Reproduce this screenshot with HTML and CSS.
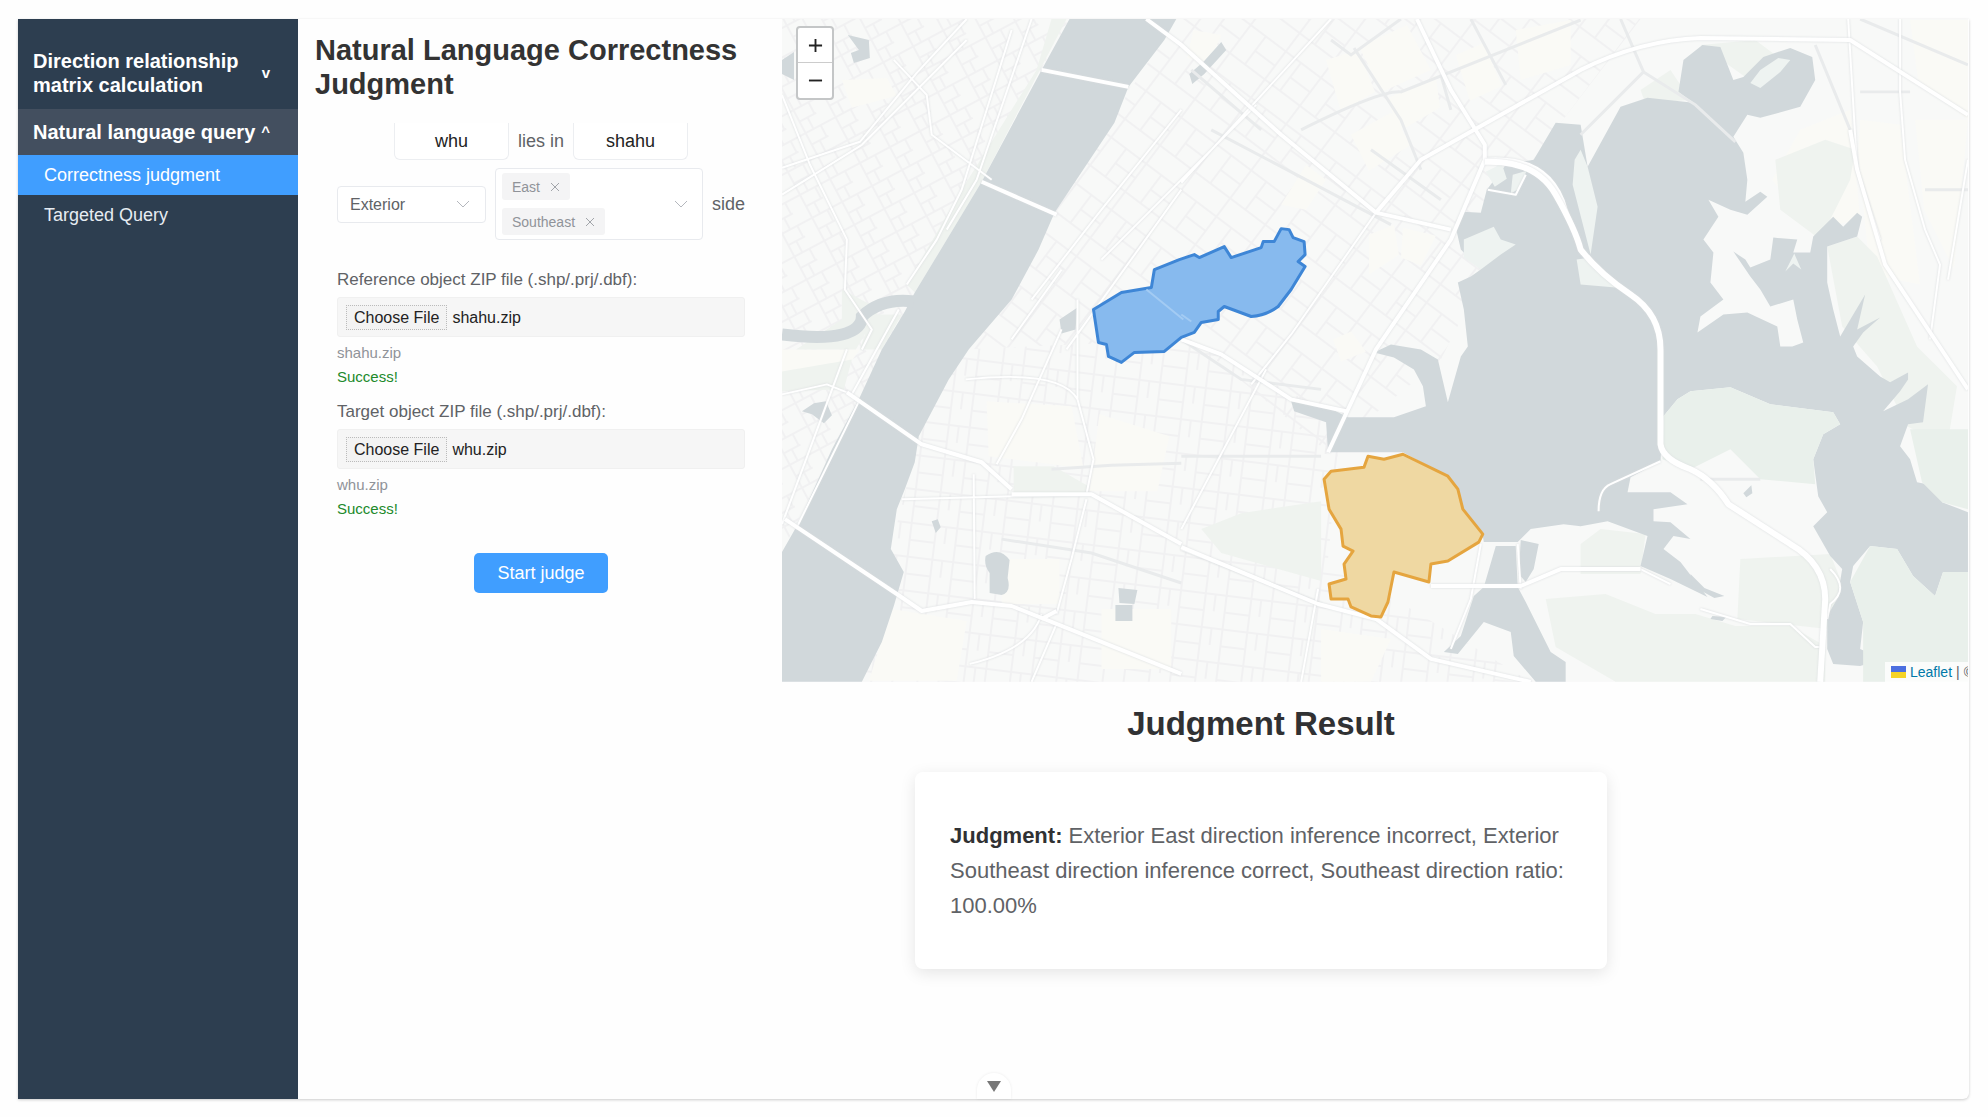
FILE: index.html
```html
<!DOCTYPE html>
<html lang="en">
<head>
<meta charset="utf-8">
<title>Natural Language Correctness Judgment</title>
<link rel="stylesheet" href="styles.css">
</head>
<body>
<div class="shell">
  <nav class="sidebar">
    <button class="group" type="button"><span>Direction relationship matrix calculation</span><span class="caret">v</span></button>
    <button class="group group-open" type="button"><span>Natural language query</span><span class="caret">^</span></button>
    <a class="item item-active" href="#judge">Correctness judgment</a>
    <a class="item" href="#query">Targeted Query</a>
  </nav>

  <section class="panel">
    <h1>Natural Language Correctness Judgment</h1>
    <form class="form">
      <div class="line">
        <input class="name" type="text" value="whu" aria-label="Target object">
        <span>lies in</span>
        <input class="name" type="text" value="shahu" aria-label="Reference object">
      </div>
      <div class="line relation">
        <div class="pick">
          <select aria-label="Relation"><option>Exterior</option><option>Interior</option></select>
          <svg class="chevron" viewBox="0 0 14 14"><path d="M1 4l6 6 6-6"/></svg>
        </div>
        <div class="multi" role="group" aria-label="Directions">
          <div class="tags">
            <span class="tag">East <button type="button" aria-label="Remove East"><svg viewBox="0 0 10 10"><path d="M1 1l8 8M9 1l-8 8"/></svg></button></span>
            <span class="tag">Southeast <button type="button" aria-label="Remove Southeast"><svg viewBox="0 0 10 10"><path d="M1 1l8 8M9 1l-8 8"/></svg></button></span>
          </div>
          <svg class="chevron" viewBox="0 0 14 14"><path d="M1 4l6 6 6-6"/></svg>
        </div>
        <span>side</span>
      </div>
      <div class="upload">
        <label for="ref">Reference object ZIP file (.shp/.prj/.dbf):</label>
        <input id="ref" type="file" accept=".zip" data-name="shahu.zip">
        <p class="file">shahu.zip</p>
        <p class="ok">Success!</p>
      </div>
      <div class="upload">
        <label for="target">Target object ZIP file (.shp/.prj/.dbf):</label>
        <input id="target" type="file" accept=".zip" data-name="whu.zip">
        <p class="file">whu.zip</p>
        <p class="ok">Success!</p>
      </div>
      <button class="start" type="button">Start judge</button>
    </form>
  </section>

  <main class="main">
    <div class="map">
      <svg class="tiles" viewBox="780 19 1188 664" preserveAspectRatio="xMidYMid slice" role="img" aria-label="Map">
        <defs>
          <pattern id="west" width="34" height="26" patternUnits="userSpaceOnUse" patternTransform="rotate(-28)"><path class="lane" d="M0 1H34M0 14H20M1 0V26M18 0V14M10 14V26"/></pattern>
          <pattern id="mid" width="58" height="44" patternUnits="userSpaceOnUse" patternTransform="rotate(-53)"><path class="lane" d="M0 1H58M0 20H36M1 0V44M36 0V44M18 20V44"/></pattern>
          <pattern id="south" width="46" height="34" patternUnits="userSpaceOnUse" patternTransform="rotate(7)"><path class="lane" d="M0 1H46M0 18H26M1 0V34M26 0V34M36 0V18"/></pattern>
        </defs>
        <rect class="land" x="780" y="19" width="1188" height="664"/>
        <!-- side streets -->
        <path fill="url(#west)" d="M780 19H1068L913 293 857 400 780 553Z"/>
        <path fill="url(#mid)" d="M1175 19H1640L1560 123 1440 360 1327 453 1190 340 960 350Z"/>
        <path fill="url(#south)" d="M960 350L1190 340 1340 420 1327 560 1460 640 1530 683H860L892 607 889 550 917 437Z"/>
        <!-- blocks and parks -->
        <g class="block">
          <path d="M1358 47l48-22 24 45-49 22zM1388 98l47-22 4 32-43 25zM1325 60l32-10 17 42-34 20zM1455 55l28-12 18 43-32 15zM1515 30l55-10v45l-50 15zM1192 30l28 5-12 28-22-5zM1280 205l25-40 20 15-20 30zM1350 135l40-22 20 32-42 26zM1368 235l25-10 5 30-30 20zM1402 228l33 8-15 30-20-8zM1332 340l18-8 15 20-25 10z"/>
          <path d="M840 80l45-2 10 18-45 12zM780 350h78l-16 22-62 6zM985 402l85 5 12 62-95-12zM1098 415l70 22-12 55-68 0zM1000 560h58v45h-58zM890 610l75 12-10 60h-88zM1800 130l50-20 10 110-50 10-38-50zM1860 120l40 5 20 160-50-10-12-120zM1910 20h58v100l-50-40zM1915 120h53l-14 150-30-60zM1100 610l70 0v60h-70zM1320 630l70 10-20 43h-50z"/>
        </g>
        <g class="park">
          <path d="M1065 19L980 182 933 260 913 293 905 285 960 190 1035 70 1050 19ZM1012 467h40l35 20v7h-75zM840 290l38 20-24 40h-60l46-30zM1200 530l40-16 80-12v80l-100-28zM1640 90l30-20 20 30-45 4zM1700 45l55-5 20 15-30 22zM870 315l30 0-20 35-22 0zM780 372l70-12-8 30-62 2z"/>
          <path d="M1855 150l-30-10-50 20 5 50 40 30 30-60zM1827 247l30-10 20 20 40 90 40 40-10 60-40-20-30-60-35-40zM1600 530l45 5-5 40h-60v-30zM1740 560l90-5 12 30-15 45-90-10zM1545 600l60-5 50 20 40 0 40 12 55 0 35 20v36h-210l-60-35z"/>
        </g>
        <!-- rivers and lakes -->
        <g class="water">
          <path d="M1068 19H1175L1163 40 1127 87 1113 123 1053 213 1037 250 1010 300 967 350 947 380 917 437 913 463 903 490 895 510 889 550 902 573 892 607 880 643 860 683H780V553L797 523 830 450 857 400 880 350 903 312 913 293 933 260 980 182 1040 70Z"/>
          <path d="M1555 123L1580 125 1587 167 1620 107 1647 98 1693 103 1678 92 1683 60 1702 45 1720 47 1733 80 1743 77 1763 57 1790 48 1812 57 1815 80 1800 107 1760 118 1747 115 1733 137 1743 153 1747 180 1745 202 1760 192 1767 197 1747 215 1730 210 1708 200 1718 217 1703 240 1713 253 1710 283 1723 300 1700 317 1697 333 1723 315 1747 313 1777 327 1780 347 1792 347 1803 343 1797 320 1793 300 1770 307 1760 290 1750 277 1733 252 1745 260 1750 268 1770 260 1773 238 1797 240 1793 253 1810 253 1813 237 1833 217 1843 227 1857 213 1862 217 1857 237 1827 247 1827 283 1833 310 1840 337 1865 295 1857 330 1880 318 1863 333 1853 347 1857 357 1880 377 1890 383 1908 373 1908 380 1900 392 1883 412 1908 400 1928 385 1923 423 1908 425 1900 447 1910 460 1917 483 1942 488 1942 503 1968 513V573L1943 573 1935 597 1913 577 1897 550 1870 547 1853 567 1850 583 1863 623 1860 650 1883 660 1860 667 1833 665 1827 650 1827 617 1837 600 1842 570 1830 557 1813 527 1827 513 1818 497 1813 460 1823 435 1840 425 1833 413 1770 405 1730 388 1690 392 1677 400 1663 417 1660 462 1630 478 1627 493 1670 493 1687 505 1653 510 1653 522 1670 523 1690 540 1673 537 1663 550 1680 563 1707 598 1670 580 1640 567 1647 537 1607 522 1580 527 1563 525 1530 530 1517 543 1483 543 1482 537 1463 510 1447 477 1402 453 1327 453 1325 423 1293 412 1290 402 1327 408 1347 418 1393 418 1425 407 1422 387 1413 370 1393 358 1373 353 1390 345 1420 350 1437 360 1447 403 1460 357 1467 347 1463 310 1457 283 1470 277 1480 270 1460 250 1455 228 1462 212 1480 213 1486 190 1505 165 1533 160Z"/>
          <path d="M1495 547L1515 547 1517 588 1525 603 1540 633 1550 653 1565 663V683H1535L1513 657 1510 633 1483 623 1457 655 1443 653 1460 637 1473 597 1483 588ZM1520 541L1538 545 1533 570 1525 583 1518 575Z"/>
          <path d="M984 557q14-10 24 4l-2 18q4 14-6 17l-12-2 0-20q-6-8-4-17zM1117 589l19 2-3 14-15-1zM1114 606h17v16h-17zM846 35l21 5 1 18-16 5-3-10 8-3zM780 60l12-8v28l-12-6zM1058 320l18-12-2 22-14 4zM800 412l12-8 12-2 6 14-8 8-12-9zM930 522l6-2 3 8-5 6zM1188 74l14-12 18-20 5 8-22 24-12 10zM1690 575l14 14 20 8-10 2-22-12zM1712 617l14 1-4 4-12-2zM1743 494l8-8 1 8-6 4z"/>
          <path class="canal" d="M780 335Q820 340 840 335T860 317Q880 298 912 302"/>
        </g>
        <!-- islands, capes and shore greenery -->
        <path class="shore" d="M1463 240l30-13 7 13 15 5-15 10-20 15-17-12zM1580 150l7 17 10 40-7 48-18-70 2-25zM1590 258l25 30-35-3-4-25zM1760 70l18-12 12 2-10 12-20 16-10-5zM1485 172l16-8 5 15-12 8zM1512 175l14-4-8 18-8 5zM1785 272l9-18 7 16-8-6z"/>
        <path class="green" d="M1663 417L1677 400 1690 392 1730 388 1770 405 1833 413 1840 425 1823 435 1813 460 1815 485 1760 480 1730 450 1690 470 1662 460ZM1870 547L1897 550 1913 577 1935 597 1943 573H1968V683H1863L1863 623 1850 583ZM1910 430h58v80l-26-7-20-20z"/>
        <!-- minor roads -->
        <g class="casing">
          <path d="M1300 130Q1380 90 1400 92L1580 20M1353 48L1400 120 1420 170M1330 40L1350 55 1400 19M1210 130L1390 225M1190 70L1260 130M1620 19L1643 72 1695 105 1735 142M1643 72L1590 125 1580 135M1470 19L1505 85M1440 75L1450 110M1370 150L1440 200M1815 45L1850 130M1860 19L1968 65M1860 92L1910 92M1925 190h43M1700 480h60M1180 340l60 40 80 10M1180 457h140M1000 540l90 14 90 30M1050 470l60-4 70-2"/>
        </g>
        <!-- main roads -->
        <g class="road thin">
          <path d="M780 95L808 165 845 240 843 290 870 330 860 350M780 195L860 145 965 40M780 168L858 142 915 73 965 19M892 60L925 95 930 135 990 180M1010 30L960 190 935 240 905 285M1030 19L975 180 945 230M780 395L825 385 850 395 897 310M1180 183L1330 19M1100 260L1255 105M1065 350L1180 190M1030 300L1100 210 1180 110M1010 340L1060 270M1076 300V400L1092 460 1085 495M1085 500L1070 560 1055 615M972 475L973 600M900 500L1090 495M964 380Q1060 370 1076 400M845 350L780 525M858 400L794 530M1060 330l-40 90-25 45M1180 300L1135 350M1265 370L1180 530M1250 385L1290 335 1375 213M1180 550L1320 605M968 665Q1030 650 1040 615M1030 683L1055 625M1900 19V92L1905 160 1925 230 1940 265 1930 340M1968 160L1948 280M1848 19L1857 170 1880 240M1480 545L1470 600 1450 650M1317 590L1300 683M1517 545L1520 590M1660 462L1610 485Q1598 490 1598 512M1580 570L1640 570 1670 585M1700 610L1750 625 1790 625 1815 648H1822M1830 570Q1850 590 1830 605L1827 620M1487 190L1515 195 1525 175"/>
        </g>
        <g class="road">
          <path d="M1145 19L1180 45 1280 135 1375 213 1450 230M1040 70L1127 87M980 182L1055 215M1375 213L1420 160 1580 70Q1640 40 1700 38L1850 40 1968 115M1416 19L1450 90 1484 145 1484 160 1450 240 1375 350 1327 453M1484 160Q1550 155 1565 210L1580 250M1180 340L1220 355 1290 400 1345 412M783 520L895 595 920 612 970 603 1010 607 1050 623 1180 675M845 393L920 445 980 463 1010 490M1010 495H1090L1180 545M1040 620L1055 612M1180 548L1317 605 1375 620 1430 660 1530 683M1430 587H1520L1560 570H1640M1850 130L1857 170 1885 265 1968 390"/>
        </g>
        <path class="road wide" d="M1484 162Q1535 160 1555 195T1580 250Q1600 275 1630 295T1660 350V445Q1662 460 1690 470 1712 480 1728 505L1790 545Q1825 565 1825 600L1820 683"/>
        <!-- query objects -->
        <path class="reference" d="M1092 310L1120 293 1150 288 1153 270 1178 260 1193 255 1198 258 1223 247 1230 258 1260 248 1262 242 1273 242 1280 229 1288 230 1292 238 1303 242 1304 255 1297 262 1304 267 1290 290 1277 307Q1265 316 1250 317L1223 307 1217 312 1217 320 1200 323 1193 333 1180 338 1163 352 1133 353 1120 363 1107 357 1105 345 1097 343Z"/>
        <path class="crossing" d="M1145 290L1182 320M1180 315L1190 322"/>
        <path class="target" d="M1323 480L1330 472 1363 468 1367 457 1383 460 1402 455 1447 477 1457 490 1462 510 1482 535 1478 543 1447 562 1430 565 1428 583 1393 573 1387 603 1380 618 1370 617 1350 608 1347 600 1330 600 1328 585 1345 580 1343 565 1352 552 1342 547 1340 530 1328 510Z"/>
      </svg>
      <div class="zoom"><button type="button" aria-label="Zoom in"><svg viewBox="0 0 16 16"><path d="M1 8h14M8 1v14"/></svg></button><button type="button" aria-label="Zoom out"><svg viewBox="0 0 16 16"><path d="M1 8h14"/></svg></button></div>
      <div class="credit"><svg viewBox="0 0 15 12"><path fill="#4c6fe0" d="M0 0h15v6H0z"/><path fill="#f5d327" d="M0 6h15v6H0z"/></svg><a href="#leaflet">Leaflet</a><span>|</span><span>©</span></div>
    </div>
    <section class="result">
      <h2>Judgment Result</h2>
      <article class="card"><p><strong>Judgment:</strong> Exterior East direction inference incorrect, Exterior Southeast direction inference correct, Southeast direction ratio: 100.00%</p></article>
    </section>
  </main>
  <button class="more" type="button" aria-label="Show more"><svg viewBox="0 0 14 11"><path d="M0 0h14L7 11z"/></svg></button>
</div>
<script src="files.js"></script>
</body>
</html>
```
FILE: styles.css
```css
* { box-sizing: border-box; }
body {
  margin: 0;
  padding: 19px 19px 18px 18px;
  background: #fefefe;
  color: #606266;
  font-family: "Liberation Sans", Arial, sans-serif;
  font-size: 18px;
}
h1, h2, p { margin: 0; }
button, input, select { font: inherit; }
button { cursor: pointer; }

.shell {
  position: relative;
  display: flex;
  min-height: calc(100vh - 37px);
  padding-right: 1px;
  border-radius: 0 0 6px 0;
  box-shadow: 0 1px 3px rgba(0, 0, 0, .2);
}

.sidebar {
  display: flex;
  flex: 0 0 280px;
  flex-direction: column;
  padding-top: 18px;
  background: #2d3e50;
}
.group {
  display: flex;
  align-items: center;
  justify-content: space-between;
  padding: 12px 28px 12px 15px;
  border: 0;
  background: none;
  color: #fff;
  font-size: 20px;
  font-weight: bold;
  line-height: 24px;
  text-align: left;
}
.group-open { background: #434f5f; padding: 11px 28px 11px 15px; }
.caret { font-size: 15px; }
.item {
  padding: 8px 26px;
  color: #e6ecf2;
  font-size: 18px;
  line-height: 24px;
  text-decoration: none;
}
.item-active { background: #409eff; color: #fff; }

.panel { flex: 0 0 482px; padding: 14px 17px; }
h1 { color: #333; font-size: 29px; line-height: 34px; }
.form {
  display: flex;
  flex-direction: column;
  padding: 22px 20px 0 22px;
}
.line { display: flex; align-items: center; justify-content: center; gap: 9px; }
.name {
  width: 115px;
  height: 37px;
  padding: 0;
  border: 1px solid #eceef1;
  border-top: 0;
  border-radius: 0 0 6px 6px;
  background: #fff;
  color: #222;
  text-align: center;
}
.relation { margin: 8px 0 28px; }
.pick { display: flex; align-items: center; flex: 0 0 149px; }
.pick select {
  width: 149px;
  height: 37px;
  padding: 0 12px;
  border: 1px solid #e8eaee;
  border-radius: 4px;
  background: #fff;
  color: #606266;
  font-size: 16px;
  appearance: none;
}
.chevron {
  flex: 0 0 14px;
  height: 14px;
  fill: none;
  stroke: #b4b7bd;
  stroke-width: 1;
  pointer-events: none;
}
.pick .chevron { margin-left: -30px; }
.multi {
  display: flex;
  flex: 0 0 208px;
  align-items: center;
  justify-content: space-between;
  padding: 4px 14px 4px 6px;
  border: 1px solid #e8eaee;
  border-radius: 4px;
  background: #fff;
}
.tags { display: flex; flex-direction: column; align-items: flex-start; gap: 8px; }
.tag {
  display: flex;
  align-items: center;
  gap: 10px;
  height: 27px;
  padding: 0 10px;
  border-radius: 3px;
  background: #f4f4f5;
  color: #909399;
  font-size: 14px;
}
.tag button { display: flex; padding: 0; border: 0; background: none; }
.tag svg { width: 10px; height: 10px; fill: none; stroke: #a2a5aa; }

.upload {
  display: flex;
  flex-direction: column;
  margin-bottom: 11px;
  font-size: 17px;
  line-height: 24px;
}
.upload input {
  width: 100%;
  height: 40px;
  margin: 5px 0 4px;
  padding: 7px 8px;
  border: 1px solid #f0f0f0;
  border-radius: 3px;
  background: #f6f6f6;
  color: #222;
  font-size: 16px;
}
.upload input::file-selector-button {
  height: 25px;
  margin: 0 5px 0 0;
  padding: 0 7px;
  border: 1px dotted #bbb;
  background: #f3f3f3;
  color: #222;
  font: inherit;
}
.file { color: #909399; font-size: 15px; }
.ok { color: #218a2b; font-size: 15px; }
.start {
  align-self: center;
  width: 134px;
  height: 40px;
  margin-top: 21px;
  border: 0;
  border-radius: 5px;
  background: #409eff;
  color: #fff;
}

.main { display: flex; flex: 1; flex-direction: column; min-width: 0; }
.map { position: relative; overflow: hidden; }
.tiles { display: block; width: 100%; }
.land { fill: #f8f9f8; }
.lane { fill: none; stroke: #f1f1f2; stroke-width: 2; }
.block { fill: #fafaf6; }
.park { fill: #eff3ef; }
.water { fill: #d1d8db; }
.canal { fill: none; stroke: #d1d8db; stroke-width: 12; }
.shore { fill: #eef3f1; }
.green { fill: #e9f0eb; }
.casing { fill: none; stroke: #e9ebec; stroke-width: 3; }
.road { fill: none; stroke: #fff; stroke-width: 4; stroke-linejoin: round; filter: drop-shadow(0 0 1px #d9dcde); }
.thin { stroke-width: 2; }
.wide { stroke-width: 6; }
.reference { fill: #87baee; stroke: #3e86d6; stroke-width: 3; stroke-linejoin: round; }
.crossing { fill: none; stroke: #a3cbf3; stroke-width: 2; }
.target { fill: #efd8a2; stroke: #e5a53f; stroke-width: 3; stroke-linejoin: round; }

.zoom {
  position: absolute;
  top: 7px;
  left: 14px;
  display: flex;
  flex-direction: column;
  border: 2px solid #c4c6c7;
  border-radius: 4px;
  background: #fff;
}
.zoom button {
  display: grid;
  place-items: center;
  width: 34px;
  height: 35px;
  padding: 0;
  border: 0;
  background: none;
}
.zoom button:first-child { border-bottom: 1px solid #ccc; }
.zoom svg { width: 15px; height: 15px; fill: none; stroke: #222; stroke-width: 2; }
.credit {
  position: absolute;
  right: 0;
  bottom: 0;
  display: flex;
  align-items: center;
  gap: 4px;
  width: 83px;
  height: 20px;
  padding-left: 6px;
  overflow: hidden;
  background: rgba(255, 255, 255, .8);
  font-size: 14px;
}
.credit svg { flex: 0 0 15px; height: 12px; }
.credit a { color: #0078a8; text-decoration: none; }

.result {
  display: flex;
  flex-direction: column;
  align-items: center;
  padding: 22px 228px 60px 0;
}
h2 { color: #303133; font-size: 33px; line-height: 40px; }
.card {
  width: 692px;
  max-width: 100%;
  margin-top: 28px;
  padding: 46px 35px;
  border-radius: 8px;
  background: #fff;
  box-shadow: 0 4px 16px rgba(0, 0, 0, .1);
  font-size: 22px;
  line-height: 35px;
}
.card strong { color: #303133; }
.more {
  position: absolute;
  bottom: 0;
  left: 50%;
  display: grid;
  place-items: center;
  width: 34px;
  height: 26px;
  padding: 0;
  border: 0;
  border-radius: 17px 17px 0 0;
  background: #fff;
  box-shadow: 0 0 3px rgba(0, 0, 0, .08);
  transform: translateX(-50%);
}
.more svg { width: 14px; height: 11px; fill: #777; }
```
FILE: files.js
```js
document.querySelectorAll('input[type=file]').forEach(function (input) {
  var transfer = new DataTransfer();
  transfer.items.add(new File([''], input.dataset.name));
  input.files = transfer.files;
});
```
